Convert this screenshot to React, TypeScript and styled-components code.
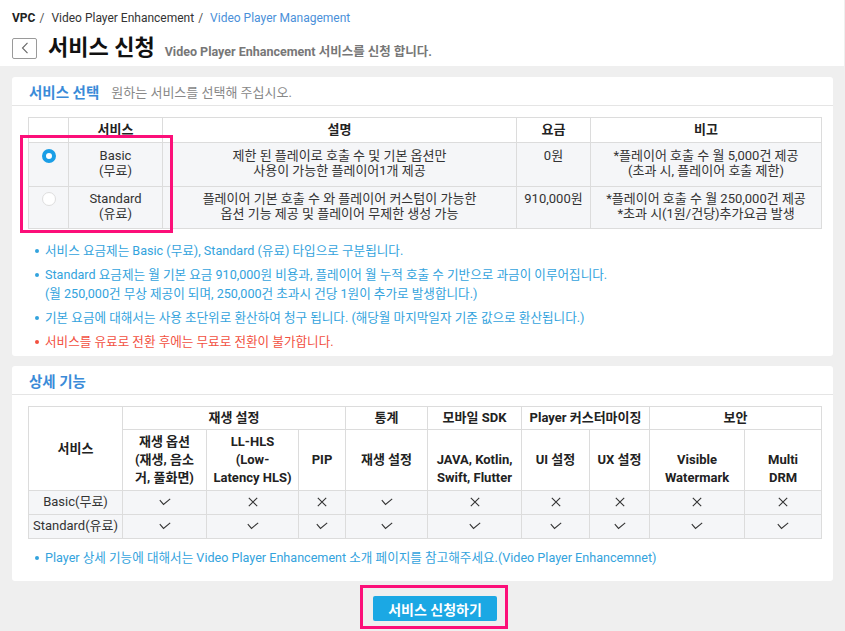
import React from "react";
import styled, { createGlobalStyle, css } from "styled-components";

const GlobalStyle = createGlobalStyle`
  html, body { margin: 0; padding: 0; background: #efefef; }
  body { font-family: Roboto, "Noto Sans CJK KR", sans-serif; color: #333; }
  * { box-sizing: border-box; }
`;

const Page = styled.div`
  width: 845px;
  min-height: 631px;
  background: #efefef;
`;

const Header = styled.header`
  background: #fff;
  padding: 10px 12px 7px;
  margin-right: 1px;
`;

const Breadcrumb = styled.nav`
  display: flex;
  align-items: center;
  font-size: 12px;
  line-height: 16px;
  color: #333;
`;

const Crumb = styled.span<{ $strong?: boolean; $active?: boolean }>`
  font-weight: ${(p) => (p.$strong ? 700 : 400)};
  color: ${(p) => (p.$active ? "#4a90d9" : p.$strong ? "#222" : "#333")};
`;

const Sep = styled.span`
  color: #555;
  margin: 0 7px 0 4px;
`;

const TitleRow = styled.div`
  display: flex;
  align-items: center;
  margin-top: 11px;
  height: 22px;
`;

const BackButton = styled.button`
  width: 25px;
  height: 21px;
  border: 1px solid #9a9a9a;
  border-radius: 2px;
  background: #fff;
  padding: 0;
  display: flex;
  align-items: center;
  justify-content: center;
  cursor: pointer;
`;

const Title = styled.h1`
  margin: 0 0 0 11px;
  font-size: 22px;
  font-weight: 700;
  color: #111;
  line-height: 22px;
`;

const Subtitle = styled.span`
  margin-left: 10px;
  font-size: 12.5px;
  font-weight: 700;
  color: #777;
  padding-top: 4px;
`;

const Main = styled.main`
  padding: 11px 12px 0;
`;

const Card = styled.section`
  background: #fff;
  border-radius: 3px;
  & + & {
    margin-top: 10px;
  }
`;

const CardHeader = styled.div`
  height: 29px;
  padding: 0 17px;
  display: flex;
  align-items: center;
  border-bottom: 1px solid #e5e5e5;
`;

const CardTitle = styled.h2`
  margin: 0;
  font-size: 14.5px;
  font-weight: 700;
  color: #3a8bd8;
`;

const CardDesc = styled.span`
  margin-left: 12px;
  font-size: 13px;
  color: #888;
`;

const CardBody = styled.div<{ $bottom: number }>`
  padding: 11px 12px ${(p) => p.$bottom}px 16px;
`;

const TableWrap = styled.div`
  position: relative;
`;

const Table = styled.table`
  width: 793px;
  border-collapse: collapse;
  table-layout: fixed;
  font-size: 13px;
  color: #333;
`;

const Col = styled.col<{ $w: number }>`
  width: ${(p) => p.$w}px;
`;

const Th = styled.th<{ $h?: number; $lead?: boolean }>`
  border: 1px solid #dcdcdc;
  background: #fff;
  font-weight: 700;
  color: #222;
  text-align: center;
  vertical-align: middle;
  height: ${(p) => p.$h ?? 24}px;
  line-height: 18px;
  padding: 0 2px;
  white-space: nowrap;
  ${(p) =>
    p.$lead &&
    css`
      padding-top: 18px;
    `}
`;

const Td = styled.td<{ $h?: number; $firstLine?: boolean }>`
  border: 1px solid #dcdcdc;
  background: #f5f6f8;
  text-align: center;
  vertical-align: middle;
  height: ${(p) => p.$h ?? 23}px;
  line-height: 15px;
  padding: 0 3px 3px;
  white-space: nowrap;
  ${(p) =>
    p.$firstLine &&
    css`
      &::after {
        content: "";
        display: block;
        height: 15px;
      }
    `}
`;

const Radio = styled.span<{ $checked?: boolean }>`
  display: inline-block;
  width: 14px;
  height: 14px;
  border-radius: 50%;
  vertical-align: middle;
  background: #fff;
  border: ${(p) => (p.$checked ? "4px solid #1a9ee6" : "1px solid #dedede")};
`;

const Highlight = styled.div`
  position: absolute;
  left: -8px;
  top: 18px;
  width: 153px;
  height: 98px;
  border: 3px solid #fc0f79;
  pointer-events: none;
`;

const Notes = styled.ul<{ $top: number }>`
  list-style: none;
  margin: ${(p) => p.$top}px 0 0;
  padding: 0 0 0 7px;
`;

const Note = styled.li<{ $warn?: boolean }>`
  display: flex;
  align-items: flex-start;
  font-size: 12.6px;
  line-height: 19px;
  color: ${(p) => (p.$warn ? "#f2503f" : "#33a3dd")};
  & + & {
    margin-top: 5px;
  }
`;

const Dot = styled.span`
  flex: none;
  width: 4px;
  height: 4px;
  border-radius: 50%;
  background: currentColor;
  margin: 7.5px 6px 0 0;
`;

const ButtonBar = styled.div`
  display: flex;
  justify-content: center;
  margin-top: 4px;
  padding-left: 23px;
`;

const ButtonFrame = styled.div`
  border: 3px solid #fc0f79;
  padding: 8px 8px 5px 10px;
`;

const ApplyButton = styled.button`
  width: 124px;
  height: 25px;
  border: none;
  border-radius: 2px;
  background: #1ba8e4;
  color: #fff;
  font-family: Roboto, "Noto Sans CJK KR", sans-serif;
  font-size: 14px;
  font-weight: 700;
  padding: 0;
  cursor: pointer;
`;

const Check = () => (
  <svg width="12" height="8" viewBox="0 0 12 8" style={{ verticalAlign: "middle" }}>
    <polyline points="0.8,2.2 4.5,6.4 11.2,0.8" fill="none" stroke="#333" strokeWidth="1.1" />
  </svg>
);

const Cross = () => (
  <svg width="10" height="10" viewBox="0 0 10 10" style={{ verticalAlign: "middle" }}>
    <path d="M0.8 0.8 L9.2 9.2 M9.2 0.8 L0.8 9.2" fill="none" stroke="#333" strokeWidth="1.1" />
  </svg>
);

const ChevronLeft = () => (
  <svg width="8" height="12" viewBox="0 0 8 12">
    <polyline points="6.5,0.8 1.5,6 6.5,11.2" fill="none" stroke="#666" strokeWidth="1.1" />
  </svg>
);

type Mark = boolean;
const features: { name: string; marks: Mark[] }[] = [
  { name: "Basic(무료)", marks: [true, false, false, true, false, false, false, false, false] },
  { name: "Standard(유료)", marks: [true, true, true, true, true, true, true, true, true] },
];

export default function App() {
  return (
    <Page>
      <GlobalStyle />
      <Header>
        <Breadcrumb>
          <Crumb $strong>VPC</Crumb>
          <Sep>/</Sep>
          <Crumb>Video Player Enhancement</Crumb>
          <Sep>/</Sep>
          <Crumb $active>Video Player Management</Crumb>
        </Breadcrumb>
        <TitleRow>
          <BackButton aria-label="back">
            <ChevronLeft />
          </BackButton>
          <Title>서비스 신청</Title>
          <Subtitle>Video Player Enhancement 서비스를 신청 합니다.</Subtitle>
        </TitleRow>
      </Header>

      <Main>
        <Card>
          <CardHeader>
            <CardTitle>서비스 선택</CardTitle>
            <CardDesc>원하는 서비스를 선택해 주십시오.</CardDesc>
          </CardHeader>
          <CardBody $bottom={5}>
            <TableWrap>
              <Table>
                <colgroup>
                  <Col $w={40} />
                  <Col $w={94} />
                  <Col $w={354} />
                  <Col $w={74} />
                  <Col $w={231} />
                </colgroup>
                <thead>
                  <tr>
                    <Th $h={25}></Th>
                    <Th $h={25}>서비스</Th>
                    <Th $h={25}>설명</Th>
                    <Th $h={25}>요금</Th>
                    <Th $h={25}>비고</Th>
                  </tr>
                </thead>
                <tbody>
                  <tr>
                    <Td $h={44} $firstLine>
                      <Radio $checked />
                    </Td>
                    <Td $h={44}>
                      Basic
                      <br />
                      (무료)
                    </Td>
                    <Td $h={44}>
                      제한 된 플레이로 호출 수 및 기본 옵션만
                      <br />
                      사용이 가능한 플레이어1개 제공
                    </Td>
                    <Td $h={44} $firstLine>
                      0원
                    </Td>
                    <Td $h={44}>
                      *플레이어 호출 수 월 5,000건 제공
                      <br />
                      (초과 시, 플레이어 호출 제한)
                    </Td>
                  </tr>
                  <tr>
                    <Td $h={42} $firstLine>
                      <Radio />
                    </Td>
                    <Td $h={42}>
                      Standard
                      <br />
                      (유료)
                    </Td>
                    <Td $h={42}>
                      플레이어 기본 호출 수 와 플레이어 커스텀이 가능한
                      <br />
                      옵션 기능 제공 및 플레이어 무제한 생성 가능
                    </Td>
                    <Td $h={42} $firstLine>
                      910,000원
                    </Td>
                    <Td $h={42}>
                      *플레이어 호출 수 월 250,000건 제공
                      <br />
                      *초과 시(1원/건당)추가요금 발생
                    </Td>
                  </tr>
                </tbody>
              </Table>
              <Highlight />
            </TableWrap>
            <Notes $top={12}>
              <Note>
                <Dot />
                <span>서비스 요금제는 Basic (무료), Standard (유료) 타입으로 구분됩니다.</span>
              </Note>
              <Note>
                <Dot />
                <span>
                  Standard 요금제는 월 기본 요금 910,000원 비용과, 플레이어 월 누적 호출 수 기반으로 과금이 이루어집니다.
                  <br />
                  (월 250,000건 무상 제공이 되며, 250,000건 초과시 건당 1원이 추가로 발생합니다.)
                </span>
              </Note>
              <Note>
                <Dot />
                <span>기본 요금에 대해서는 사용 초단위로 환산하여 청구 됩니다. (해당월 마지막일자 기준 값으로 환산됩니다.)</span>
              </Note>
              <Note $warn>
                <Dot />
                <span>서비스를 유료로 전환 후에는 무료로 전환이 불가합니다.</span>
              </Note>
            </Notes>
          </CardBody>
        </Card>

        <Card>
          <CardHeader>
            <CardTitle>상세 기능</CardTitle>
          </CardHeader>
          <CardBody $bottom={14}>
            <Table>
              <colgroup>
                <Col $w={94} />
                <Col $w={84} />
                <Col $w={92} />
                <Col $w={47} />
                <Col $w={82} />
                <Col $w={94} />
                <Col $w={68} />
                <Col $w={60} />
                <Col $w={95} />
                <Col $w={77} />
              </colgroup>
              <thead>
                <tr>
                  <Th rowSpan={2}>서비스</Th>
                  <Th colSpan={3} $h={23}>재생 설정</Th>
                  <Th $h={23}>통계</Th>
                  <Th $h={23}>모바일 SDK</Th>
                  <Th colSpan={2} $h={23}>Player 커스터마이징</Th>
                  <Th colSpan={2} $h={23}>보안</Th>
                </tr>
                <tr>
                  <Th $h={61}>
                    재생 옵션
                    <br />
                    (재생, 음소
                    <br />
                    거, 풀화면)
                  </Th>
                  <Th $h={61}>
                    LL-HLS
                    <br />
                    (Low-
                    <br />
                    Latency HLS)
                  </Th>
                  <Th $h={61}>PIP</Th>
                  <Th $h={61}>재생 설정</Th>
                  <Th $h={61} $lead>
                    JAVA, Kotlin,
                    <br />
                    Swift, Flutter
                  </Th>
                  <Th $h={61}>UI 설정</Th>
                  <Th $h={61}>UX 설정</Th>
                  <Th $h={61} $lead>
                    Visible
                    <br />
                    Watermark
                  </Th>
                  <Th $h={61} $lead>
                    Multi
                    <br />
                    DRM
                  </Th>
                </tr>
              </thead>
              <tbody>
                {features.map((f) => (
                  <tr key={f.name}>
                    <Td $h={24}>{f.name}</Td>
                    {f.marks.map((m, i) => (
                      <Td key={i} $h={24}>
                        {m ? <Check /> : <Cross />}
                      </Td>
                    ))}
                  </tr>
                ))}
              </tbody>
            </Table>
            <Notes $top={9}>
              <Note>
                <Dot />
                <span>Player 상세 기능에 대해서는 Video Player Enhancement 소개 페이지를 참고해주세요.(Video Player Enhancemnet)</span>
              </Note>
            </Notes>
          </CardBody>
        </Card>

        <ButtonBar>
          <ButtonFrame>
            <ApplyButton>서비스 신청하기</ApplyButton>
          </ButtonFrame>
        </ButtonBar>
      </Main>
    </Page>
  );
}
